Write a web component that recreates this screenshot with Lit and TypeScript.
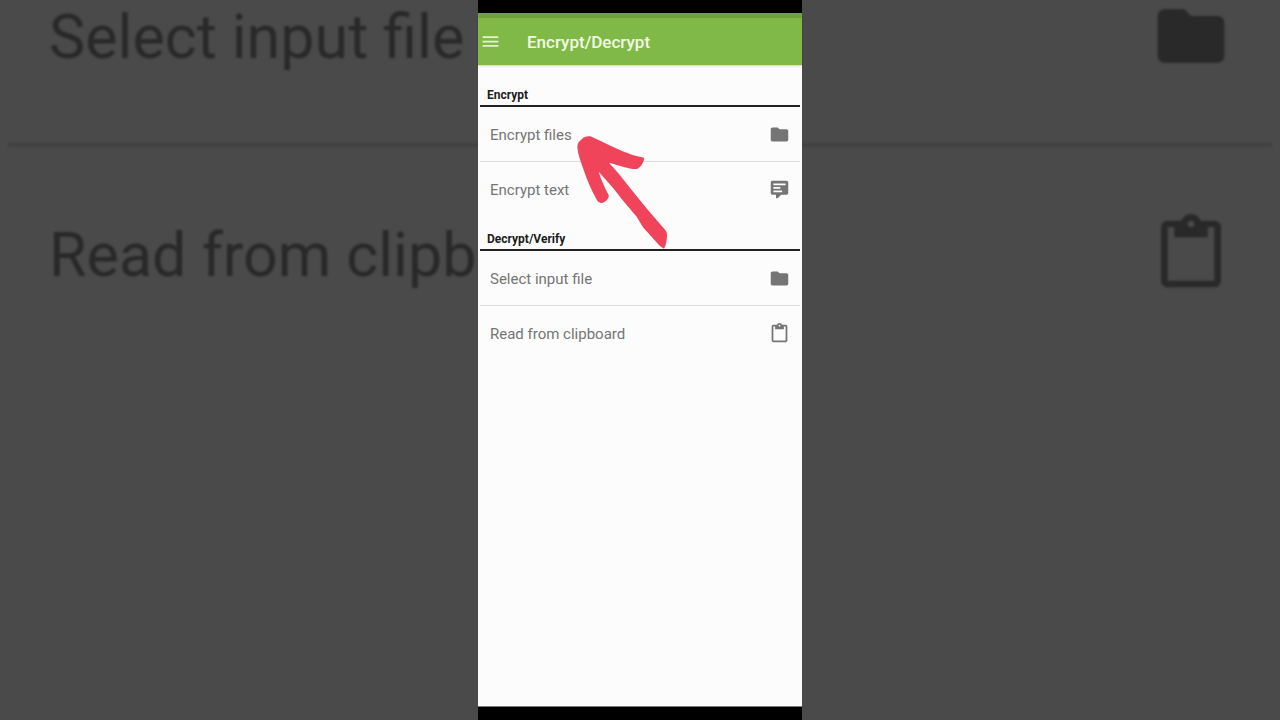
import { LitElement, html, css, svg } from "lit";
import { customElement, property } from "lit/decorators.js";

const shapes = {
  menu: svg`<path d="M3 6h18v2H3zM3 11h18v2H3zM3 16h18v2H3z" />`,
  folder: svg`<path d="M10 4H4c-1.100 0-2 .9-2 2v12c0 1.100.9 2 2 2h16c1.100 0 2-.9 2-2V8c0-1.100-.9-2-2-2h-8l-2-2z" />`,
  comment: svg`<path d="M9 22a1 1 0 0 1-1-1v-3H4a2 2 0 0 1-2-2V4c0-1.110.9-2 2-2h16a2 2 0 0 1 2 2v12a2 2 0 0 1-2 2h-6.100l-3.700 3.710c-.2.190-.45.290-.7.290H9M5 5v2h14V5H5m0 4v2h8V9H5m0 4v2h10v-2H5z" />`,
  clipboard: svg`<path d="M19 20H5V4h2v3h10V4h2M12 2a1 1 0 0 1 1 1 1 1 0 0 1-1 1 1 1 0 0 1-1-1 1 1 0 0 1 1-1m7 0h-4.180C14.400.84 13.300 0 12 0s-2.400.84-2.820 2H5a2 2 0 0 0-2 2v16a2 2 0 0 0 2 2h14a2 2 0 0 0 2-2V4a2 2 0 0 0-2-2z" />`,
};

type Shape = keyof typeof shapes;

interface Entry {
  label: string;
  icon: Shape;
}

interface Section {
  title: string;
  entries: Entry[];
}

const sections: Section[] = [
  {
    title: "Encrypt",
    entries: [
      { label: "Encrypt files", icon: "folder" },
      { label: "Encrypt text", icon: "comment" },
    ],
  },
  {
    title: "Decrypt/Verify",
    entries: [
      { label: "Select input file", icon: "folder" },
      { label: "Read from clipboard", icon: "clipboard" },
    ],
  },
];

@customElement("glyph-icon")
class GlyphIcon extends LitElement {
  @property() name: Shape = "folder";

  static styles = css`
    :host {
      display: block;
      flex: none;
    }
    .glyph {
      display: block;
      width: 100%;
      height: 100%;
      fill: currentColor;
    }
  `;

  render() {
    return html`<svg class="glyph" viewBox="0 0 24 24" aria-hidden="true">${shapes[this.name]}</svg>`;
  }
}

@customElement("enlarged-backdrop")
class EnlargedBackdrop extends LitElement {
  static styles = css`
    :host {
      display: block;
      overflow: hidden;
      background: #4a4a4a;
      color: #292929;
      font-family: Roboto, sans-serif;
    }
    .list {
      margin: -73px 8px 0;
      filter: blur(1px);
    }
    .row {
      display: flex;
      align-items: center;
      justify-content: space-between;
      box-sizing: border-box;
      height: 216px;
      padding: 2px 41px 0;
      font-size: 61px;
      line-height: 80px;
      white-space: nowrap;
    }
    .row + .row {
      border-top: 4px solid #424242;
    }
    .label {
      padding-top: 2px;
    }
    .icon {
      width: 80px;
      height: 80px;
    }
  `;

  render() {
    return html`<div class="list">
      ${sections[1].entries.map(
        (entry) => html`<div class="row">
          <span class="label">${entry.label}</span>
          <glyph-icon class="icon" .name=${entry.icon}></glyph-icon>
        </div>`
      )}
    </div>`;
  }
}

@customElement("phone-screen")
class PhoneScreen extends LitElement {
  static styles = css`
    :host {
      position: relative;
      display: flex;
      flex-direction: column;
      background: #fcfcfc;
      font-family: Roboto, sans-serif;
    }
    .status {
      height: 13px;
      background: #000;
      border-bottom: 5px solid #6ea23a;
    }
    .toolbar {
      display: flex;
      align-items: center;
      gap: 26px;
      height: 47px;
      padding: 0 2px;
      background: #80b948;
      color: #f1fbe4;
      box-shadow: 0 1px 2px #00000030;
    }
    .menu {
      padding: 0;
      border: 0;
      background: none;
      color: #e3f5cb;
      cursor: pointer;
    }
    .menu-icon {
      width: 21px;
      height: 21px;
    }
    .title {
      margin: 0;
      font-size: 17px;
      font-weight: 500;
      line-height: 24px;
    }
    .content {
      flex: 1;
      padding: 20px 2px 0;
    }
    .heading {
      margin: 0;
      padding: 0 7px;
      border-bottom: 2px solid #222;
      color: #1c1c1c;
      font-size: 12px;
      font-weight: 700;
      line-height: 20px;
    }
    .entries {
      margin: 0;
      padding: 0 0 13px;
      list-style: none;
    }
    .entry + .entry {
      border-top: 1px solid #dedede;
    }
    .action {
      display: flex;
      align-items: center;
      justify-content: space-between;
      width: 100%;
      height: 54px;
      padding: 0 10px;
      border: 0;
      background: none;
      color: #757575;
      font: 15px/24px Roboto, sans-serif;
      text-align: left;
      cursor: pointer;
    }
    .label {
      padding-top: 2px;
    }
    .icon {
      width: 21px;
      height: 21px;
    }
    .navigation {
      height: 13px;
      background: #000;
      border-top: 1px solid #777;
    }
    .arrow {
      position: absolute;
      left: 82px;
      top: 125px;
      width: 120px;
      height: 130px;
      fill: #f0445b;
      pointer-events: none;
    }
  `;

  render() {
    return html`
      <div class="status"></div>
      <header class="toolbar">
        <button class="menu" aria-label="Menu">
          <glyph-icon class="menu-icon" name="menu"></glyph-icon>
        </button>
        <h1 class="title">Encrypt/Decrypt</h1>
      </header>
      <main class="content">
        ${sections.map(
          (section) => html`<section>
            <h2 class="heading">${section.title}</h2>
            <ul class="entries">
              ${section.entries.map(
                (entry) => html`<li class="entry">
                  <button class="action">
                    <span class="label">${entry.label}</span>
                    <glyph-icon class="icon" .name=${entry.icon}></glyph-icon>
                  </button>
                </li>`
              )}
            </ul>
          </section>`
        )}
      </main>
      <div class="navigation"></div>
      <svg class="arrow" viewBox="0 0 360 390" aria-hidden="true">
        <path
          d="M52 66 Q51 57 57 50 L70 38 Q78 32 91 34 L130 52 C165 69 210 92 252 98 C253 108 244 126 232 131 C219 136 184 123 147 113 L175 145 L215 195 L262 253 L315 314 Q322 320 321 334 Q320 358 312 371 Q303 367 294 357 L249 307 L230 275 L190 228 L160 190 L116 140 C123 163 135 190 146 210 C148 220 136 234 123 234 Q115 234 111 226 C96 198 82 168 70 132 C61 107 53 85 52 66 Z"
        />
      </svg>
    `;
  }
}

@customElement("app-root")
class AppRoot extends LitElement {
  static styles = css`
    :host {
      display: grid;
      grid-template: 100vh / 100%;
      overflow: hidden;
    }
    .backdrop,
    .phone {
      grid-area: 1 / 1;
    }
    .phone {
      justify-self: center;
      height: 100%;
      aspect-ratio: 9 / 20;
    }
  `;

  render() {
    return html`
      <enlarged-backdrop class="backdrop" aria-hidden="true"></enlarged-backdrop>
      <phone-screen class="phone"></phone-screen>
    `;
  }
}
